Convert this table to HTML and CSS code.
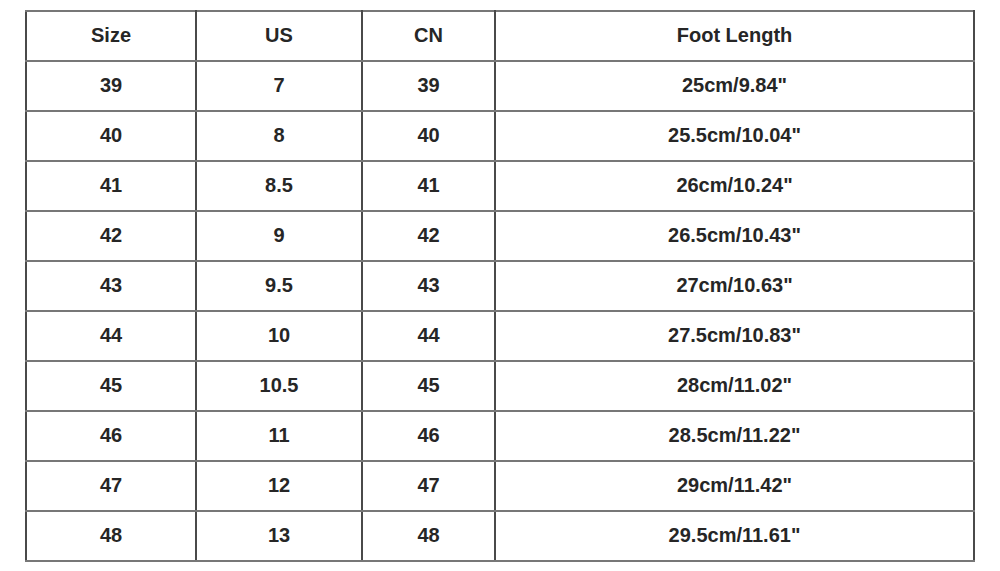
FILE: index.html
```html
<!DOCTYPE html>
<html>
<head>
<meta charset="utf-8">
<link rel="stylesheet" href="styles.css">
</head>
<body>
<table class="size-table">
  <colgroup>
    <col class="c1"><col class="c2"><col class="c3"><col class="c4">
  </colgroup>
  <tr><td>Size</td><td>US</td><td>CN</td><td>Foot Length</td></tr>
  <tr><td>39</td><td>7</td><td>39</td><td>25cm/9.84"</td></tr>
  <tr><td>40</td><td>8</td><td>40</td><td>25.5cm/10.04"</td></tr>
  <tr><td>41</td><td>8.5</td><td>41</td><td>26cm/10.24"</td></tr>
  <tr><td>42</td><td>9</td><td>42</td><td>26.5cm/10.43"</td></tr>
  <tr><td>43</td><td>9.5</td><td>43</td><td>27cm/10.63"</td></tr>
  <tr><td>44</td><td>10</td><td>44</td><td>27.5cm/10.83"</td></tr>
  <tr><td>45</td><td>10.5</td><td>45</td><td>28cm/11.02"</td></tr>
  <tr><td>46</td><td>11</td><td>46</td><td>28.5cm/11.22"</td></tr>
  <tr><td>47</td><td>12</td><td>47</td><td>29cm/11.42"</td></tr>
  <tr><td>48</td><td>13</td><td>48</td><td>29.5cm/11.61"</td></tr>
</table>
</body>
</html>
```

FILE: styles.css
```css
html, body {
  margin: 0;
  padding: 0;
  background: #fff;
}
body {
  padding: 10px 0 0 25px;
}
.size-table {
  border-collapse: collapse;
  table-layout: fixed;
  width: 948px;
  font-family: "Liberation Sans", Arial, sans-serif;
  font-weight: bold;
  font-size: 20px;
  color: #262626;
}
.c1 { width: 170px; }
.c2 { width: 166px; }
.c3 { width: 133px; }
.c4 { width: 479px; }
.size-table td {
  border-top: 2px solid #777777;
  border-bottom: 2px solid #777777;
  border-left: 2px solid #4a4a4a;
  border-right: 2px solid #4a4a4a;
  height: 46px;
  padding: 0 0 2px 0;
  text-align: center;
  vertical-align: middle;
}
```
